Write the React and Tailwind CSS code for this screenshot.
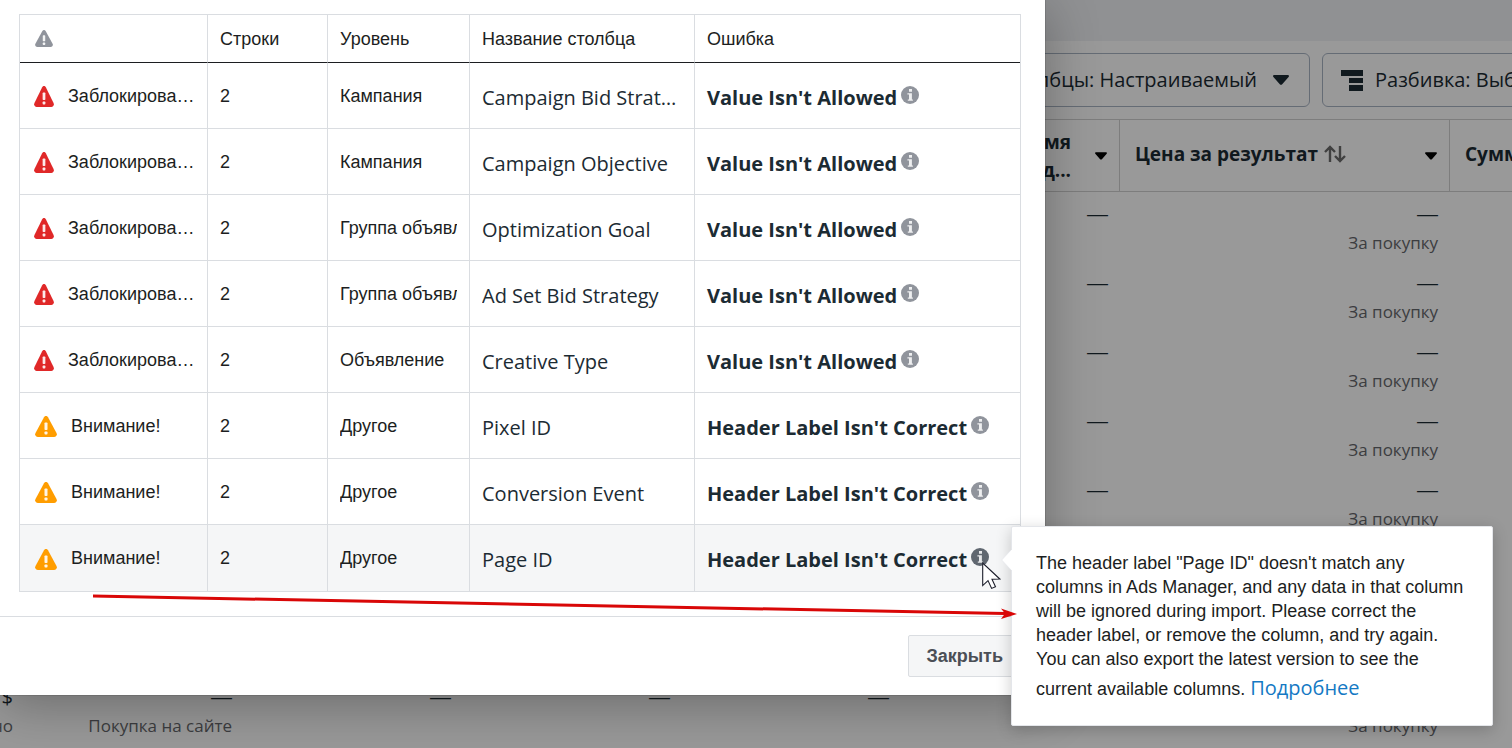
import React from 'react';

const issues = [
  { level: 'error', status: 'Заблокировано', rows: 2, scope: 'Кампания', column: 'Campaign Bid Strategy', error: "Value Isn't Allowed" },
  { level: 'error', status: 'Заблокировано', rows: 2, scope: 'Кампания', column: 'Campaign Objective', error: "Value Isn't Allowed" },
  { level: 'error', status: 'Заблокировано', rows: 2, scope: 'Группа объявлений', column: 'Optimization Goal', error: "Value Isn't Allowed" },
  { level: 'error', status: 'Заблокировано', rows: 2, scope: 'Группа объявлений', column: 'Ad Set Bid Strategy', error: "Value Isn't Allowed" },
  { level: 'error', status: 'Заблокировано', rows: 2, scope: 'Объявление', column: 'Creative Type', error: "Value Isn't Allowed" },
  { level: 'warning', status: 'Внимание!', rows: 2, scope: 'Другое', column: 'Pixel ID', error: "Header Label Isn't Correct" },
  { level: 'warning', status: 'Внимание!', rows: 2, scope: 'Другое', column: 'Conversion Event', error: "Header Label Isn't Correct" },
  { level: 'warning', status: 'Внимание!', rows: 2, scope: 'Другое', column: 'Page ID', error: "Header Label Isn't Correct", active: true },
];

const resultRows = [0, 1, 2, 3, 4, 5, 6];

function WarningIcon({ className }) {
  return (
    <svg viewBox="0 0 22 21" preserveAspectRatio="none" className={className} aria-hidden="true">
      <path
        d="M11 0c.8 0 1.500.4 2 1.300L21.500 17c.9 1.700 0 4-2.500 4H3C.500 21-.400 18.700.500 17L9 1.300C9.500.4 10.200 0 11 0z"
        fill="currentColor"
      />
      <rect x="9.500" y="6.500" width="3" height="7.500" rx="0.800" fill="#fff" fillOpacity="0.9" />
      <rect x="9.500" y="15.500" width="3" height="3" rx="0.800" fill="#fff" fillOpacity="0.9" />
    </svg>
  );
}

function InfoIcon() {
  return (
    <svg viewBox="0 0 18 18" className="block size-[18px]" aria-hidden="true">
      <circle cx="9" cy="9" r="9" fill="currentColor" />
      <path d="M8 3h3v2.800H8zM6.400 7.300h4.500v6.200h1v1.200H6.800v-1.200h1.200V8.600H6.400z" fill="#fff" fillOpacity="0.85" />
    </svg>
  );
}

function Caret({ className }) {
  return (
    <svg viewBox="0 0 16 10" className={className} aria-hidden="true">
      <path d="M1.200 0h13.600c1 0 1.500 1.200.8 2L9.200 9.200c-.7.8-1.700.8-2.400 0L.4 2C-.3 1.200.2 0 1.200 0z" fill="currentColor" />
    </svg>
  );
}

function BreakdownIcon() {
  return (
    <svg viewBox="0 0 22 21" className="h-[21px] w-[22px]" aria-hidden="true">
      <path d="M0 0h22v6H0zM8 8h14v5H8zM8 15h14v6H8z" fill="currentColor" />
    </svg>
  );
}

function SortIcon() {
  return (
    <svg viewBox="0 0 22 18" className="h-[18px] w-[22px] text-[#6b6b6b]" aria-hidden="true">
      <path d="M6 17V2M1 7l5-5 5 5M16 1v15M11 11l5 5 5-5" fill="none" stroke="currentColor" strokeWidth="2.400" />
    </svg>
  );
}

function Metric({ value, note }) {
  return (
    <div className="flex h-[69px] flex-col items-end whitespace-nowrap pt-2 pr-3">
      {value ? (
        <span className="text-[20px] leading-7 text-[#1c2b33]">{value}</span>
      ) : (
        <span className="font-['Liberation_Sans',sans-serif] text-[21px] leading-7 text-[#1c2b33]">—</span>
      )}
      {note && <span className="text-[17px] leading-[30px] text-[#65676b]">{note}</span>}
    </div>
  );
}

function AdsManager() {
  return (
    <main className="h-screen overflow-hidden bg-white font-['Open_Sans','Noto_Sans',sans-serif] text-[#1c2b33]">
      <div className="h-[41px] bg-[#f0f2f5]" />
      <div className="flex gap-3 py-3">
        <div className="flex w-[1310px] shrink-0 justify-end">
          <button type="button" className="flex h-[54px] items-center gap-4 rounded-md border border-[#a9b4c4] px-5 text-[20px] font-medium">
            <span>Столбцы: Настраиваемый</span>
            <Caret className="h-[10px] w-4" />
          </button>
        </div>
        <button type="button" className="flex h-[54px] shrink-0 items-center gap-3 rounded-md border border-[#a9b4c4] px-[18px] text-[20px] font-medium">
          <BreakdownIcon />
          <span>Разбивка: Выберите</span>
        </button>
      </div>
      <table className="w-[1780px] table-fixed border-separate border-spacing-0">
        <colgroup>
          <col className="w-[25px]" />
          <col className="w-[219px]" />
          <col className="w-[219px]" />
          <col className="w-[219px]" />
          <col className="w-[219px]" />
          <col className="w-[219px]" />
          <col className="w-[330px]" />
          <col />
        </colgroup>
        <thead>
          <tr className="h-[73px] text-left text-[19px] leading-7 font-bold">
            {[0, 1, 2, 3, 4].map((i) => (
              <th key={i} className="border-y border-r border-[#d0d0d0]" />
            ))}
            <th className="border-y border-r border-[#d0d0d0] pr-3">
              <div className="flex items-center justify-end gap-6">
                <span className="text-right">
                  Время
                  <br />
                  след...
                </span>
                <Caret className="h-2 w-3 text-black" />
              </div>
            </th>
            <th className="border-y border-r border-[#d0d0d0] pr-3 pl-[15px]">
              <div className="flex items-center">
                <span className="flex items-center gap-[6px] pb-1">
                  Цена за результат
                  <SortIcon />
                </span>
                <Caret className="ml-auto h-2 w-3 text-black" />
              </div>
            </th>
            <th className="border-y border-[#d0d0d0] pb-1 pl-[15px]">Сумма затрат</th>
          </tr>
        </thead>
        <tbody>
          {resultRows.map((row) => (
            <tr key={row}>
              <td colSpan={5} />
              <td><Metric /></td>
              <td><Metric note="За покупку" /></td>
              <td />
            </tr>
          ))}
          <tr>
            <td><Metric value="0,00 $" note="Ежедневно" /></td>
            <td><Metric note="Покупка на сайте" /></td>
            <td><Metric /></td>
            <td><Metric /></td>
            <td><Metric /></td>
            <td><Metric /></td>
            <td><Metric note="За покупку" /></td>
            <td />
          </tr>
        </tbody>
      </table>
    </main>
  );
}

function Tooltip() {
  return (
    <div
      role="tooltip"
      className="absolute -top-5 left-10 z-10 w-[482px] rounded-xs border border-[#e4e6ea] bg-white px-6 pt-6 pb-5 text-left font-['Liberation_Sans',sans-serif] text-lg leading-6 font-normal whitespace-normal text-[#1c1e21] shadow-[0_4px_16px_rgba(0,0,0,0.2)]"
    >
      <svg viewBox="0 0 11 22" className="absolute top-[22px] -left-[11px] h-[22px] w-[11px]" aria-hidden="true">
        <path d="M11 0L0 11l11 11z" fill="#fff" />
        <path d="M11 0L.5 11 11 22" fill="none" stroke="#e4e6ea" />
      </svg>
      The header label "Page ID" doesn't match any columns in Ads Manager, and any data in that column will be ignored
      during import. Please correct the header label, or remove the column, and try again. You can also export the latest
      version to see the current available columns.{' '}
      <a href="#more" className="font-['Open_Sans','Noto_Sans',sans-serif] text-[20px] leading-[34px] text-[#1479c4]">Подробнее</a>
    </div>
  );
}

function Cursor() {
  return (
    <svg viewBox="0 0 19 28" className="absolute top-4 left-[11px] z-20 h-7 w-[19px]" aria-hidden="true">
      <path d="M.7 1v22.600l5.300-5 3.600 7.800 3.900-1.600-3.500-7.600 7.800-.2z" fill="#fff" stroke="#1c1e2b" strokeWidth="1.100" />
    </svg>
  );
}

function IssueRow({ issue, last }) {
  const isError = issue.level === 'error';
  const line = last ? '' : 'border-b';

  return (
    <tr className={issue.active ? 'h-[66px] bg-[#f5f6f7]' : 'h-[66px]'}>
      <td className={`border-r border-[#dadde1] pr-3 pl-[14px] ${line}`}>
        <div className={isError ? 'flex items-center gap-[14px]' : 'flex items-center gap-[14px] pl-px'}>
          <WarningIcon className={isError ? 'mt-[2px] h-[21px] w-5 shrink-0 text-[#e02828]' : 'mt-[2px] h-[21px] w-[22px] shrink-0 text-[#ff9d00]'} />
          <span className="truncate">{issue.status}</span>
        </div>
      </td>
      <td className={`border-r border-[#dadde1] px-3 ${line}`}>{issue.rows}</td>
      <td className={`border-r border-[#dadde1] px-3 ${line}`}>
        <div className="overflow-hidden whitespace-nowrap">{issue.scope}</div>
      </td>
      <td className={`border-r border-[#dadde1] px-3 ${line}`}>
        <div className="truncate pt-1 font-['Open_Sans','Noto_Sans',sans-serif] text-[20px] leading-7 text-[#1c2b33]">
          {issue.column}
        </div>
      </td>
      <td className={`border-[#dadde1] px-3 ${line}`}>
        <div className="flex gap-1 pt-1 font-['Open_Sans','Noto_Sans',sans-serif] whitespace-nowrap text-[#1c2b33]">
          <span className="text-[20px] leading-7 font-bold">{issue.error}</span>
          <div className="relative pt-[2px]">
            <button type="button" aria-label="Подробнее" className={issue.active ? 'block text-[#606770]' : 'block text-[#90949c]'}>
              <InfoIcon />
            </button>
            {issue.active && <Tooltip />}
            {issue.active && <Cursor />}
          </div>
        </div>
      </td>
    </tr>
  );
}

function ImportDialog() {
  return (
    <section
      role="dialog"
      aria-label="Ошибка"
      className="relative bg-white font-['Liberation_Sans',sans-serif] text-lg leading-6 text-[#1c1e21] shadow-[0_10px_50px_rgba(0,0,0,0.3),0_0_0_1px_rgba(0,0,0,0.1)]"
    >
      <div className="pt-[14px] pr-6 pb-6 pl-[19px]">
        <table className="w-full table-fixed border-separate border-spacing-0 border border-[#dadde1]">
          <colgroup>
            <col className="w-[188px]" />
            <col className="w-[120px]" />
            <col className="w-[142px]" />
            <col className="w-[225px]" />
            <col />
          </colgroup>
          <thead>
            <tr className="h-12 text-left">
              <th className="border-r border-b border-r-[#dadde1] border-b-[#1c1e21] px-[15px] font-normal" aria-label="Статус">
                <WarningIcon className="h-[17px] w-[18px] text-[#90949c]" />
              </th>
              <th className="border-r border-b border-r-[#dadde1] border-b-[#1c1e21] px-3 font-normal">Строки</th>
              <th className="border-r border-b border-r-[#dadde1] border-b-[#1c1e21] px-3 font-normal">Уровень</th>
              <th className="border-r border-b border-r-[#dadde1] border-b-[#1c1e21] px-3 font-normal">Название столбца</th>
              <th className="border-b border-b-[#1c1e21] px-3 font-normal">Ошибка</th>
            </tr>
          </thead>
          <tbody>
            {issues.map((issue, i) => (
              <IssueRow key={issue.column} issue={issue} last={i === issues.length - 1} />
            ))}
          </tbody>
        </table>
      </div>
      <footer className="flex justify-end border-t border-[#dadde1] pt-[18px] pr-6 pb-[18px]">
        <button type="button" className="h-[42px] rounded-xs border border-[#dadde1] bg-[#f5f6f7] px-[17px] font-bold text-[#4b4f56]">
          Закрыть
        </button>
      </footer>
      {/* red pointer from the warning row to the hint */}
      <svg viewBox="0 0 924 30" className="pointer-events-none absolute bottom-[73px] left-[93px] z-20 h-[30px] w-[924px]" aria-hidden="true">
        <path d="M0 4L912 21.500" stroke="#d90707" strokeWidth="3" fill="none" />
        <path d="M924 22L908 16.500l4 5-4 5.500z" fill="#d90707" />
      </svg>
    </section>
  );
}

export default function App() {
  return (
    <div className="relative overflow-hidden">
      <AdsManager />
      <div className="absolute inset-0 bg-black/40 pr-[467px]">
        <ImportDialog />
      </div>
    </div>
  );
}
